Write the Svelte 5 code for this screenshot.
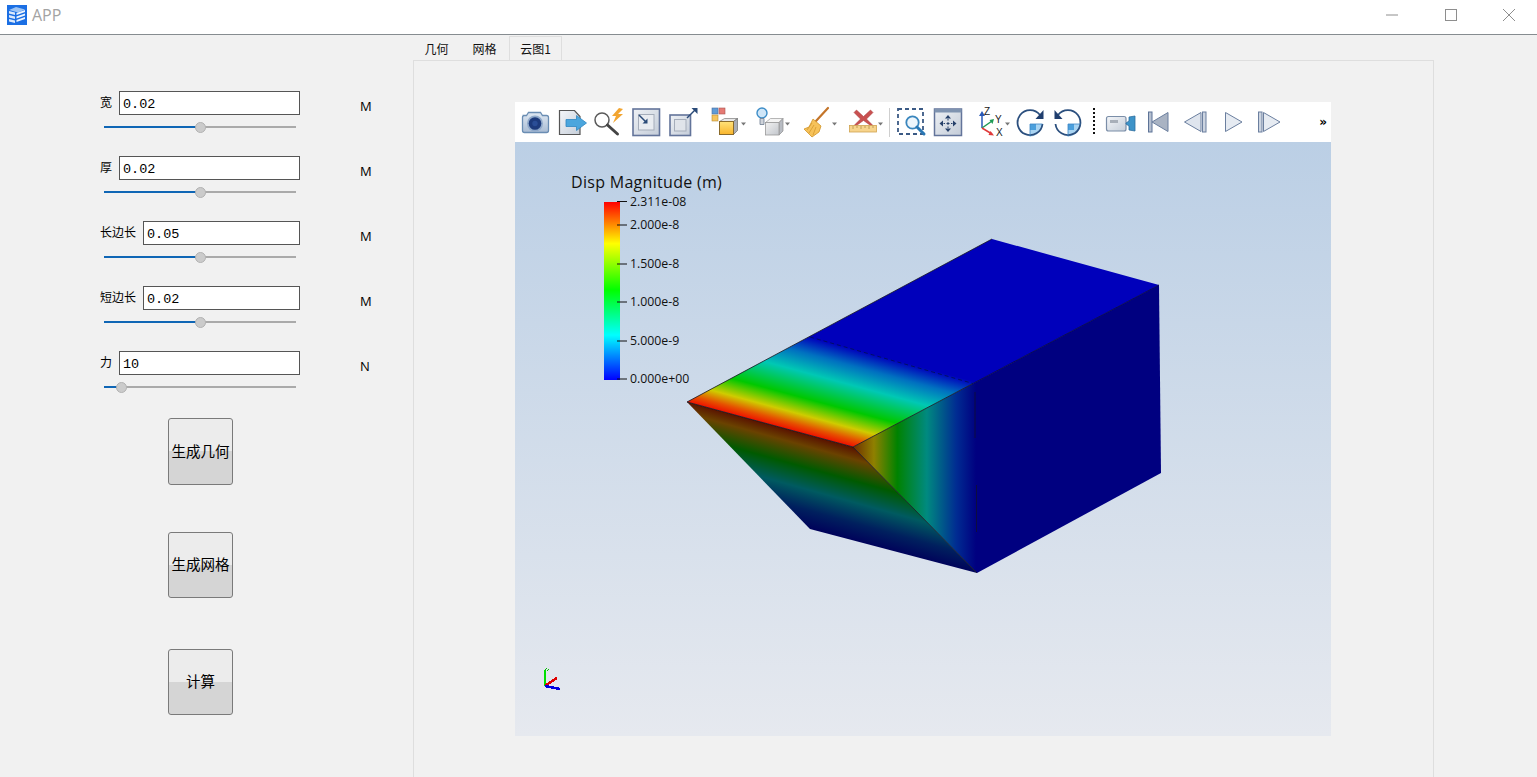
<script>
  const fields = [
    { label: '宽', value: '0.02', unit: 'M', pct: 50 },
    { label: '厚', value: '0.02', unit: 'M', pct: 50 },
    { label: '长边长', value: '0.05', unit: 'M', pct: 50 },
    { label: '短边长', value: '0.02', unit: 'M', pct: 50 },
    { label: '力', value: '10', unit: 'N', pct: 9 }
  ];
  const ticks = [
    { y: 201.5, t: '2.311e-08' },
    { y: 225, t: '2.000e-8' },
    { y: 264, t: '1.500e-8' },
    { y: 302, t: '1.000e-8' },
    { y: 341, t: '5.000e-9' },
    { y: 379, t: '0.000e+00' }
  ];
</script>

<div class="window">
  <header class="titlebar">
    <svg class="logo" viewBox="0 0 20 20" aria-hidden="true">
      <rect width="20" height="20" fill="#1b6fe4" />
      <path d="M2 5l7-3 9 2.500-7 3z" fill="#9cc4f5" />
      <path d="M2 6l6 1.500v2.500l-6-1.500zM2 10l6 1.500v2.500l-6-1.500zM2 14l6 1.500v2.500l-6-1.500z" fill="#dbe9fb" />
      <path d="M9.500 8l8.500-3v2l-8.500 3zM9.500 11.500l8.500-3v2l-8.500 3zM9.500 15l8.500-3v2l-8.500 3z" fill="#eef5fe" />
    </svg>
    <span class="apptitle">APP</span>
    <div class="winbtns">
      <svg viewBox="0 0 12 12" aria-hidden="true"><path d="M0 6h12" /></svg>
      <svg viewBox="0 0 12 12" aria-hidden="true"><rect x=".5" y=".5" width="11" height="11" /></svg>
      <svg viewBox="0 0 12 12" aria-hidden="true"><path d="M0 0l12 12M12 0L0 12" /></svg>
    </div>
  </header>

  <div class="body">
    <aside class="side">
      {#each fields as f}
        <div class="field">
          <div class="fieldtop">
            <div class="labelled">
              <span class="lab">{f.label}</span>
              <input class="inp" value={f.value} readonly />
            </div>
            <span class="unit">{f.unit}</span>
          </div>
          <div class="slider">
            <div class="fill" style="width:{f.pct}%"></div>
            <div class="thumb"></div>
          </div>
        </div>
      {/each}
      <button class="act first">生成几何</button>
      <button class="act second">生成网格</button>
      <button class="act third">计算</button>
    </aside>

    <main class="right">
      <nav class="tabs">
        <span class="tab t1">几何</span>
        <span class="tab t2">网格</span>
        <span class="tab t3 sel">云图1</span>
      </nav>
      <section class="pane">
        <div class="view">
          <div class="toolbar">
            <!-- camera -->
            <svg style="width:36px" viewBox="518 0 36 39" aria-hidden="true">
              <defs>
                <linearGradient id="gb" x1="0" y1="0" x2="0" y2="1"><stop offset="0" stop-color="#dfe8f2" /><stop offset="1" stop-color="#a9bcd4" /></linearGradient>
                <linearGradient id="gl" x1="0" y1="0" x2="1" y2="1"><stop offset="0" stop-color="#f4f6f9" /><stop offset="1" stop-color="#c6ced9" /></linearGradient>
                <linearGradient id="go" x1="0" y1="0" x2="0" y2="1"><stop offset="0" stop-color="#ffe27a" /><stop offset="1" stop-color="#f9b52c" /></linearGradient>
                <linearGradient id="gy" x1="0" y1="0" x2="1" y2="1"><stop offset="0" stop-color="#f2f2f2" /><stop offset="1" stop-color="#c2c6cc" /></linearGradient>
                <linearGradient id="gs" x1="0" y1="0" x2="1" y2="1"><stop offset="0" stop-color="#eef1f5" /><stop offset="1" stop-color="#c4ccd8" /></linearGradient>
              </defs>
              <path d="M522.500 13.500h4l2-3h12l2 3h4a2 2 0 0 1 2 2v13a2 2 0 0 1-2 2h-22a2 2 0 0 1-2-2v-13a2 2 0 0 1 2-2z" fill="url(#gb)" stroke="#6a8db3" stroke-width="1.300" />
              <circle cx="535" cy="21.500" r="8" fill="#8fa9ca" />
              <circle cx="535" cy="21.500" r="6.300" fill="#1d3a7c" />
              <circle cx="535" cy="21.500" r="2.700" fill="#2a4d96" />
            </svg>
            <!-- export -->
            <svg style="width:37px" viewBox="554 0 37 39" aria-hidden="true">
              <path d="M559.500 8.500h15l5.500 6v18h-20.500z" fill="url(#gl)" stroke="#555" stroke-width="1.200" />
              <path d="M566 17.500h10.500v-4l10 7.500-10 7.500v-4H566z" fill="#4ba6dd" stroke="#2f86c1" stroke-width=".8" />
            </svg>
            <!-- zoom lightning -->
            <svg style="width:37px" viewBox="591 0 37 39" aria-hidden="true">
              <path d="M619 6l-7 8h4l-3 7 10-9h-5l5-5z" fill="#f2a531" />
              <circle cx="602" cy="18" r="7" fill="#fff" stroke="#5a5a5a" stroke-width="1.500" />
              <path d="M607.500 23l10 9" stroke="#444" stroke-width="3" stroke-linecap="round" />
            </svg>
            <!-- reset in -->
            <svg style="width:37px" viewBox="628 0 37 39" aria-hidden="true">
              <rect x="633" y="7" width="26.500" height="26.500" fill="url(#gs)" stroke="#63749a" stroke-width="1.600" />
              <rect x="638.500" y="12.500" width="15.500" height="15.500" fill="#e9ecf1" stroke="#a5adba" />
              <path d="M639 13l7 7" stroke="#2a4a78" stroke-width="1.500" />
              <path d="M647.500 21.500v-5l-5 5z" fill="#2a4a78" />
            </svg>
            <!-- reset out -->
            <svg style="width:37px" viewBox="665 0 37 39" aria-hidden="true">
              <rect x="670" y="13" width="20.500" height="20.500" fill="url(#gs)" stroke="#63749a" stroke-width="1.600" />
              <rect x="674.500" y="17.500" width="11.500" height="11.500" fill="#e0e4ea" stroke="#a5adba" />
              <path d="M687 16l8-8" stroke="#2a4a78" stroke-width="1.500" />
              <path d="M697.500 6v6l-6-6z" fill="#2a4a78" />
            </svg>
            <!-- colored cube -->
            <svg style="width:47px" viewBox="702 0 47 39" aria-hidden="true">
              <rect x="712" y="6" width="6" height="6" fill="#5f9bd6" stroke="#4a6fa0" stroke-width=".6" />
              <rect x="719" y="6" width="6" height="6" fill="#e57a74" stroke="#a85650" stroke-width=".6" />
              <rect x="712" y="13" width="6" height="6" fill="#f6c45d" stroke="#b58a35" stroke-width=".6" />
              <path d="M719.500 19.500l5-3h13l-4 3z" fill="#e8e8e8" stroke="#7d7d7d" stroke-width=".7" />
              <path d="M733.500 19.500l4-3v12l-4 4z" fill="#a9adb5" stroke="#6d6d6d" stroke-width=".7" />
              <rect x="719.500" y="19.500" width="14" height="13" fill="url(#go)" stroke="#8a6a2a" stroke-width="1" />
              <path d="M741 20.500h5l-2.500 3z" fill="#777" />
            </svg>
            <!-- light + cube -->
            <svg style="width:46px" viewBox="749 0 46 39" aria-hidden="true">
              <circle cx="762" cy="11" r="5" fill="#cfe6f8" stroke="#3d8dc8" stroke-width="1.400" />
              <path d="M760 16.500h4v6h-4z" fill="#cfd3d9" stroke="#6d7c90" stroke-width=".8" />
              <path d="M765.500 20.500l5-4h12.500l-4 4z" fill="#f4f4f4" stroke="#9a9a9a" stroke-width=".7" />
              <path d="M779 20.500l4-4v12.500l-4 4z" fill="#b8bcc3" stroke="#8d8d8d" stroke-width=".7" />
              <rect x="765.500" y="20.500" width="13.500" height="12.500" fill="url(#gy)" stroke="#9a9a9a" stroke-width=".8" />
              <path d="M785 20.500h5l-2.500 3z" fill="#777" />
            </svg>
            <!-- broom -->
            <svg style="width:47px" viewBox="795 0 47 39" aria-hidden="true">
              <path d="M828 6l-12 13" stroke="#c4752a" stroke-width="2.200" stroke-linecap="round" />
              <path d="M813 17l8 7-2 6-7 5-8-8 5-2z" fill="#f6c25a" stroke="#d09428" stroke-width=".8" />
              <path d="M814 23l-5 8M816 25l-3 8M812 21l-5 7" stroke="#d09428" stroke-width=".7" />
              <path d="M832 20.500h5l-2.500 3z" fill="#777" />
            </svg>
            <!-- X ruler -->
            <svg style="width:46px" viewBox="842 0 46 39" aria-hidden="true">
              <path d="M856.500 8l7 6.500 7-6.500 2.500 2.500-6.500 6.500 6.500 6.500-2.500 0-7-5-7 5-2.500 0 6.500-6.500-6.500-6.500z" fill="#c85050" stroke="#a93a3a" stroke-width=".5" />
              <rect x="849.500" y="23.500" width="27" height="6.500" fill="#f7d48c" stroke="#cfa450" stroke-width=".8" />
              <path d="M853 24v3M857 24v2M861 24v3M865 24v2M869 24v3M873 24v2" stroke="#a88a40" stroke-width=".7" />
              <path d="M878 20.500h5l-2.500 3z" fill="#777" />
            </svg>
            <div class="sep"></div>
            <!-- zoom box -->
            <svg style="width:38px" viewBox="892 0 38 39" aria-hidden="true">
              <rect x="898" y="7" width="25" height="25" fill="none" stroke="#3b5a85" stroke-width="1.800" stroke-dasharray="4 3" />
              <circle cx="912.500" cy="20.500" r="6.200" fill="#eef6fc" stroke="#3a86bd" stroke-width="1.800" />
              <path d="M917 25l7 7" stroke="#2a78b5" stroke-width="3" stroke-linecap="round" />
            </svg>
            <!-- move -->
            <svg style="width:38px" viewBox="930 0 38 39" aria-hidden="true">
              <rect x="934.500" y="7" width="27" height="26.500" fill="url(#gs)" stroke="#63749a" stroke-width="1.500" />
              <rect x="934.500" y="7" width="27" height="3.500" fill="#7f93b0" />
              <path d="M948 21.500v-5M948 21.500v5M948 21.500h-5M948 21.500h5" stroke="#26406a" stroke-width="1" stroke-dasharray="1.500 1.500" />
              <path d="M948 13l3 3.500h-6zM948 30l3-3.500h-6zM939.500 21.500l3.500-3v6zM956.500 21.500l-3.500-3v6z" fill="#26406a" />
            </svg>
            <!-- axes -->
            <svg style="width:44px" viewBox="968 0 44 39" aria-hidden="true">
              <path d="M982 26V12" stroke="#2a59b8" stroke-width="1.500" />
              <path d="M982 9l3 5h-6z" fill="#2a59b8" />
              <path d="M982 26l10-7" stroke="#1e9a55" stroke-width="1.500" />
              <path d="M994 17l-1.500 5-3-4z" fill="#1e9a55" />
              <path d="M982 26l10 6" stroke="#e03a3a" stroke-width="1.500" />
              <path d="M994 33.500l-5.500-.5 2-4z" fill="#e03a3a" />
              <text x="984" y="13" class="axl">Z</text>
              <text x="995" y="21" class="axl">Y</text>
              <text x="996" y="34" class="axl">X</text>
              <path d="M1005 20.500h5l-2.500 3z" fill="#777" />
            </svg>
            <!-- rotate cw -->
            <svg style="width:38px" viewBox="1012 0 38 39" aria-hidden="true">
              <path d="M1030 22v12.500a12.500 12.500 0 0 0 12.500-12.500z" fill="#a9d4f2" />
              <rect x="1030" y="22" width="6" height="6" fill="#4b9fdc" />
              <path d="M1040 13a12.500 12.500 0 1 0 2.500 9" fill="none" stroke="#2b4f7e" stroke-width="1.800" />
              <path d="M1030 22h12.500M1030 22v12.500" stroke="#3d86c4" stroke-width=".8" />
              <path d="M1043.500 8v9h-8z" fill="#203e6e" />
            </svg>
            <!-- rotate ccw -->
            <svg style="width:37px" viewBox="1050 0 37 39" aria-hidden="true">
              <path d="M1068 22v12.500a12.500 12.500 0 0 0 12.500-12.500z" fill="#a9d4f2" />
              <rect x="1068" y="22" width="6" height="6" fill="#4b9fdc" />
              <path d="M1058 13a12.500 12.500 0 1 1-2.500 9" fill="none" stroke="#2b4f7e" stroke-width="1.800" />
              <path d="M1068 22h12.500M1068 22v12.500" stroke="#3d86c4" stroke-width=".8" />
              <path d="M1054.500 8v9h8z" fill="#203e6e" />
            </svg>
            <!-- dotted separator -->
            <div class="dots"></div>
            <!-- video camera -->
            <svg style="width:38px" viewBox="1102 0 38 39" aria-hidden="true">
              <rect x="1106.500" y="14.500" width="19.500" height="14.500" rx="2" fill="url(#gl)" stroke="#7b8ea8" stroke-width="1.200" />
              <rect x="1110" y="18" width="8" height="3" fill="#a8afb9" />
              <path d="M1126 21l3-2v-4l6-1v15l-6-1v-4l-3-2z" fill="#3d93c8" stroke="#2f6f9f" stroke-width=".8" />
            </svg>
            <!-- first -->
            <svg style="width:37px" viewBox="1140 0 37 39" aria-hidden="true">
              <rect x="1148.500" y="10" width="3.500" height="20" fill="#b6c0d0" stroke="#5d7397" />
              <path d="M1168 10.500v19l-16-9.500z" fill="#a9b3c3" stroke="#6b7f9f" />
            </svg>
            <!-- prev -->
            <svg style="width:37px" viewBox="1177 0 37 39" aria-hidden="true">
              <path d="M1201 10.500v19l-16.500-9.500z" fill="#dfe5ee" stroke="#6b7f9f" />
              <rect x="1202.500" y="10" width="3.500" height="20" fill="#ccd4e0" stroke="#6b7f9f" />
            </svg>
            <!-- play -->
            <svg style="width:38px" viewBox="1214 0 38 39" aria-hidden="true">
              <path d="M1225.500 10.500v19l16.500-9.500z" fill="#e6ebf2" stroke="#6b7f9f" />
            </svg>
            <!-- last -->
            <svg style="width:38px" viewBox="1252 0 38 39" aria-hidden="true">
              <rect x="1258.500" y="10" width="3.500" height="20" fill="#ccd4e0" stroke="#6b7f9f" />
              <path d="M1263.500 10.500v19l16.500-9.500z" fill="#e6ebf2" stroke="#6b7f9f" />
            </svg>
            <span class="more">»</span>
          </div>

          <svg class="scene" viewBox="515 142 816 594" aria-hidden="true">
            <defs>
              <linearGradient id="bar" x1="0" y1="0" x2="0" y2="1">
                <stop offset="0" stop-color="#ff0000" />
                <stop offset=".234" stop-color="#ffff00" />
                <stop offset=".495" stop-color="#00ff00" />
                <stop offset=".748" stop-color="#00ffff" />
                <stop offset="1" stop-color="#0000ff" />
              </linearGradient>
              <linearGradient id="top" gradientUnits="userSpaceOnUse" x1="687" y1="402" x2="749" y2="173">
                <stop offset="0" stop-color="#ee1000" />
                <stop offset=".03" stop-color="#e65000" />
                <stop offset=".075" stop-color="#cfcc00" />
                <stop offset=".145" stop-color="#00c800" />
                <stop offset=".25" stop-color="#00c8b4" />
                <stop offset=".33" stop-color="#0070c0" />
                <stop offset=".4" stop-color="#0000bb" />
              </linearGradient>
              <linearGradient id="front" gradientUnits="userSpaceOnUse" x1="687" y1="402" x2="663" y2="489">
                <stop offset="0" stop-color="#5a1400" />
                <stop offset=".12" stop-color="#6a4200" />
                <stop offset=".35" stop-color="#005a00" />
                <stop offset=".58" stop-color="#005a60" />
                <stop offset=".8" stop-color="#00205e" />
                <stop offset="1" stop-color="#00005a" />
              </linearGradient>
              <linearGradient id="side" gradientUnits="userSpaceOnUse" x1="853" y1="0" x2="976" y2="0">
                <stop offset="0" stop-color="#6e2e00" />
                <stop offset=".17" stop-color="#8f8000" />
                <stop offset=".36" stop-color="#008200" />
                <stop offset=".6" stop-color="#008a80" />
                <stop offset=".84" stop-color="#002c92" />
                <stop offset="1" stop-color="#000080" />
              </linearGradient>
              <linearGradient id="bg" x1="0" y1="0" x2="0" y2="1">
                <stop offset="0" stop-color="#bbcfe5" />
                <stop offset="1" stop-color="#e6e9ef" />
              </linearGradient>
            </defs>
            <rect x="515" y="142" width="816" height="594" fill="url(#bg)" />

            <text x="571" y="188" class="ltitle">Disp Magnitude (m)</text>
            <rect x="604" y="202" width="16" height="178" fill="url(#bar)" />
            {#each ticks as t}
              <path d="M617 {t.y}h10" stroke="#111" stroke-width="1" />
              <text x="630" y={t.y + 4} class="ltick">{t.t}</text>
            {/each}

            <polygon points="687,402 992,239 1159,285 853,447" fill="url(#top)" />
            <polygon points="853,447 1159,285 1161,473 977,573" fill="url(#side)" />
            <polygon points="687,402 853,447 977,573 810,529" fill="url(#front)" />
            <path d="M687 402L992 239M687 402L853 447M853 447L973 383.500M853 447L977 573" fill="none" stroke="#14141e" stroke-width=".8" />
            <path d="M810 337L973 383.500" stroke="#001050" stroke-width=".8" stroke-dasharray="4 3" />
            <path d="M975 392v46M976.500 485v47" stroke="#101030" stroke-width=".8" />
            <path d="M973 383.500L1159 285" stroke="#000040" stroke-width=".8" />

            <g shape-rendering="crispEdges">
              <path d="M545 670v16" stroke="#00e000" stroke-width="2.500" />
              <path d="M545 670l2-2M549 669l-2 2" stroke="#00c000" stroke-width="1" />
              <path d="M545 686l12-8" stroke="#e00000" stroke-width="2.500" />
              <path d="M545 686l15 3" stroke="#0000e0" stroke-width="2.500" />
            </g>
          </svg>
        </div>
      </section>
    </main>
  </div>
</div>

<style>
  :global(body) {
    margin: 0;
    overflow: hidden;
  }
  .window {
    width: 1537px;
    height: 777px;
    background: #f1f1f1;
    overflow: hidden;
    display: flex;
    flex-direction: column;
    font-family: "Noto Sans CJK SC", "Noto Sans", sans-serif;
    color: #000;
  }
  .titlebar {
    height: 34px;
    flex: none;
    background: #fff;
    border-bottom: 1px solid #868c90;
    display: flex;
    align-items: center;
    padding-left: 7px;
    position: relative;
  }
  .logo {
    width: 20px;
    height: 20px;
    margin-top: -4px;
  }
  .apptitle {
    margin-left: 5px;
    margin-top: -4px;
    font-family: "Open Sans", sans-serif;
    font-size: 16px;
    color: #a3a3a3;
  }
  .winbtns {
    margin-left: auto;
    display: flex;
    align-items: center;
    margin-top: -4px;
    padding-right: 22px;
  }
  .winbtns svg {
    width: 12px;
    height: 12px;
    fill: none;
    stroke: #8e8e8e;
    stroke-width: 1;
    margin-left: 46px;
  }
  .winbtns svg:first-child {
    margin-right: 1px;
  }
  .body {
    flex: 1;
    display: flex;
    min-height: 0;
  }
  .side {
    width: 413px;
    flex: none;
    padding: 56px 0 0 100px;
    box-sizing: border-box;
    display: flex;
    flex-direction: column;
    align-items: flex-start;
  }
  .field {
    height: 65px;
  }
  .fieldtop {
    display: flex;
    align-items: center;
    height: 24px;
  }
  .labelled {
    width: 200px;
    display: flex;
    align-items: center;
    gap: 7px;
  }
  .lab {
    font-size: 12px;
    line-height: 16px;
    white-space: nowrap;
    margin-top: -3px;
  }
  .inp {
    flex: 1;
    min-width: 0;
    height: 24px;
    box-sizing: border-box;
    border: 1px solid #555;
    background: #fff;
    padding: 3px 3px 0;
    font-family: "Liberation Mono", monospace;
    font-size: 13.500px;
    color: #000;
    outline: none;
  }
  .unit {
    margin-left: 60px;
    font-family: "Open Sans", sans-serif;
    font-size: 13px;
    margin-top: 5px;
  }
  .slider {
    position: relative;
    width: 192px;
    height: 2px;
    margin: 11px 0 0 4px;
    background: #aaa;
  }
  .fill {
    height: 2px;
    background: #0f66b5;
  }
  .thumb {
    position: absolute;
    top: -4px;
    left: 0;
    width: 11px;
    height: 11px;
    box-sizing: border-box;
    border-radius: 50%;
    background: #cbcbcb;
    border: 1px solid #b2b2b2;
  }
  .field:nth-child(-n+4) .thumb {
    left: 91px;
  }
  .field:nth-child(5) .thumb {
    left: 12px;
  }
  .act {
    width: 65px;
    margin-left: 68px;
    padding: 0 0 3px;
    box-sizing: border-box;
    border: 1px solid #7a7a7a;
    border-radius: 3px;
    background: linear-gradient(#ececec 0 50%, #d5d5d5 50% 100%);
    font-family: "Noto Sans CJK SC", sans-serif;
    font-size: 14.500px;
    color: #000;
  }
  .first {
    height: 67px;
    margin-top: 2px;
  }
  .second {
    height: 66px;
    margin-top: 47px;
  }
  .third {
    height: 66px;
    margin-top: 51px;
  }
  .right {
    flex: none;
    width: 1021px;
    display: flex;
    flex-direction: column;
  }
  .tabs {
    height: 25px;
    flex: none;
    display: flex;
    align-items: stretch;
    padding-top: 1px;
    box-sizing: border-box;
  }
  .tab {
    font-size: 12px;
    display: flex;
    align-items: center;
    justify-content: center;
    box-sizing: border-box;
    color: #111;
  }
  .t1 { width: 47px; }
  .t2 { width: 49px; }
  .t3 { width: 53px; }
  .sel {
    border: 1px solid #dedede;
    border-bottom: none;
  }
  .pane {
    flex: 1;
    border: 1px solid #dedede;
    border-bottom: none;
    padding: 41px 0 0 101px;
    min-height: 0;
  }
  .view {
    width: 816px;
    height: 634px;
    display: flex;
    flex-direction: column;
  }
  .toolbar {
    height: 40px;
    flex: none;
    background: #fff;
    display: flex;
    align-items: flex-start;
    padding-left: 3px;
    box-sizing: border-box;
  }
  .toolbar svg {
    height: 39px;
    flex: none;
    display: block;
  }
  .sep {
    width: 1px;
    height: 29px;
    margin: 6px 2px 0 1px;
    background: #cfcfcf;
    flex: none;
  }
  .dots {
    width: 2px;
    height: 26px;
    flex: none;
    margin: 6px 7px 0 6px;
    background: repeating-linear-gradient(#111 0 2px, transparent 2px 4px);
  }
  .more {
    margin-left: auto;
    margin-right: 4px;
    font-family: "DejaVu Sans", sans-serif;
    font-weight: 700;
    font-size: 12px;
    line-height: 40px;
  }
  .axl {
    font-family: "Liberation Sans", sans-serif;
    font-size: 10px;
    fill: #222;
  }
  .scene {
    width: 816px;
    height: 594px;
    display: block;
  }
  .ltitle {
    font-family: "Open Sans", sans-serif;
    font-size: 16px;
    letter-spacing: .3px;
    fill: #111;
  }
  .ltick {
    font-family: "Open Sans", sans-serif;
    font-size: 12.300px;
    fill: #111;
  }
</style>
